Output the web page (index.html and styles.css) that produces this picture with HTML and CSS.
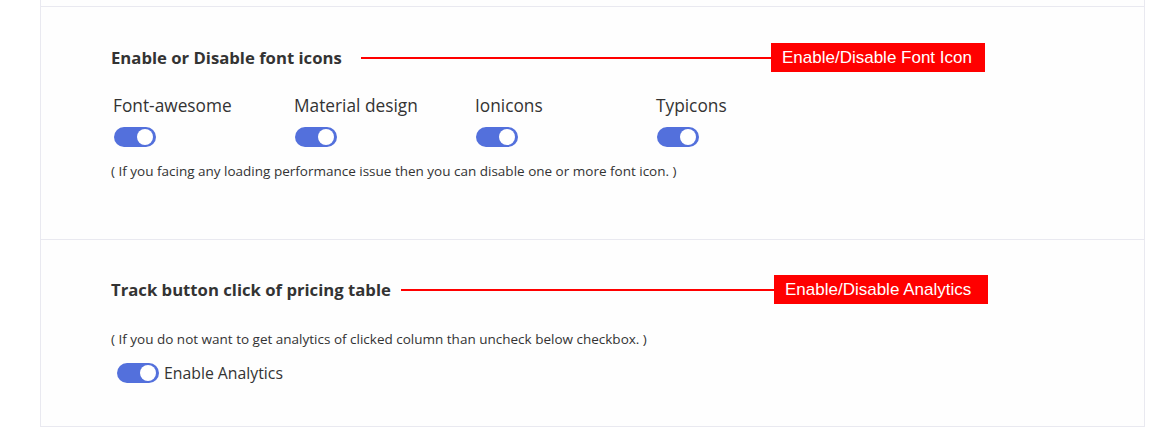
FILE: index.html
```html
<!DOCTYPE html>
<html>
<head>
<meta charset="utf-8">
<link rel="stylesheet" href="styles.css">
</head>
<body>
<div class="panel">
  <div class="prev"></div>
  <section class="sec sec-fonts">
    <div class="head-row">
      <h3 class="title">Enable or Disable font icons</h3>
      <span class="rule rule-a"></span>
      <span class="tag">Enable/Disable Font Icon</span>
    </div>
    <div class="opts">
      <div class="opt"><div class="opt-label">Font-awesome</div><span class="toggle"><span class="knob"></span></span></div>
      <div class="opt"><div class="opt-label">Material design</div><span class="toggle"><span class="knob"></span></span></div>
      <div class="opt"><div class="opt-label">Ionicons</div><span class="toggle"><span class="knob"></span></span></div>
      <div class="opt"><div class="opt-label">Typicons</div><span class="toggle"><span class="knob"></span></span></div>
    </div>
    <p class="note note-a">( If you facing any loading performance issue then you can disable one or more font icon. )</p>
  </section>
  <section class="sec sec-track">
    <div class="head-row">
      <h3 class="title">Track button click of pricing table</h3>
      <span class="rule rule-b"></span>
      <span class="tag">Enable/Disable Analytics</span>
    </div>
    <p class="note note-b">( If you do not want to get analytics of clicked column than uncheck below checkbox. )</p>
    <label class="check"><span class="toggle"><span class="knob"></span></span><span class="check-text">Enable Analytics</span></label>
  </section>
</div>
</body>
</html>
```
FILE: styles.css
```css
html, body { margin: 0; padding: 0; background: #fff; }
body {
  font-family: "Open Sans", "Noto Sans", sans-serif;
  color: #333;
  width: 1155px;
  height: 433px;
  overflow: hidden;
}
.panel {
  margin-left: 40px;
  width: 1103px;
  border-left: 1px solid #e9e9f0;
  border-right: 1px solid #e9e9f0;
  background: #fefefe;
}
.prev { height: 6px; }
.sec {
  border-top: 1px solid #e9e9f0;
  padding-left: 70px;
}
.sec-fonts { height: 233px; padding-top: 36px; box-sizing: border-box; }
.sec-track { height: 188px; padding-top: 35px; box-sizing: border-box; border-bottom: 1px solid #e9e9f0; }
.head-row {
  display: flex;
  align-items: center;
  height: 29px;
}
.title {
  margin: 0;
  width: auto;
  font-size: 16.7px;
  font-weight: 700;
  color: #333;
}
.sec-fonts .title { width: 233px; white-space: nowrap; }
.sec-track .title { width: 279px; white-space: nowrap; }
.rule { height: 2px; background: #f00; }
.rule-a { margin-left: 17px; width: 410px; }
.rule-b { margin-left: 11px; width: 373px; }
.tag {
  width: 214px;
  height: 29px;
  box-sizing: border-box;
  padding-left: 11px;
  background: #f00;
  color: #fff;
  font-family: "Liberation Sans", Arial, sans-serif;
  font-size: 17px;
  line-height: 29px;
}
.opts { display: flex; margin-top: 22px; }
.opt { width: 181px; }
.opt-label { font-size: 17.3px; line-height: 24px; padding-left: 2px; }
.toggle {
  display: block;
  position: relative;
  width: 42px;
  height: 20px;
  border-radius: 10px;
  background: #5370dc;
  margin-top: 9px;
  margin-left: 3px;
}
.knob {
  position: absolute;
  right: 3px;
  top: 2px;
  width: 16px;
  height: 16px;
  border-radius: 50%;
  background: #fff;
}
.note { margin: 0; font-size: 13.5px; line-height: 18px; }
.note-a { margin-top: 15px; }
.note-b { margin-top: 26px; }
.check { display: flex; align-items: center; margin-top: 14px; margin-left: 6px; }
.check .toggle { margin: 0; }
.check-text { margin-left: 5px; font-size: 15.8px; }
```
